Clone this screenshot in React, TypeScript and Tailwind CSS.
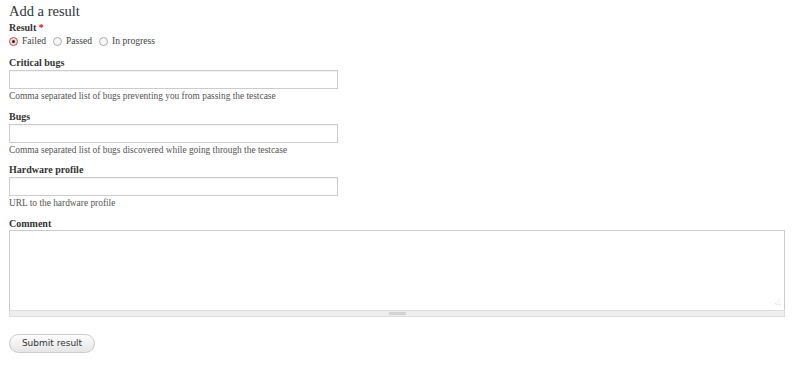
import React from "react";

const serif = { fontFamily: '"Liberation Serif", "DejaVu Serif", serif' };

function Field({ label, desc, h }: { label: string; desc: string; h: string }) {
  return (
    <div className={h}>
      <div className="text-[10px] font-bold leading-[15px] pt-[1px] text-[#333] h-[16px]">{label}</div>
      <div className="w-[329px] h-[19px] border border-[#ccc] bg-white shadow-[inset_0_1px_1px_rgba(0,0,0,0.05)]" />
      <div className="text-[9.4px] leading-[14px] text-[#555]">{desc}</div>
    </div>
  );
}

function Radio({ checked, label }: { checked?: boolean; label: string }) {
  return (
    <div className="flex items-center gap-[4px] mr-[7px]">
      <span
        className={
          "w-[9px] h-[9px] rounded-full border flex items-center justify-center " +
          (checked ? "border-[#c05050] bg-[#f3d6d6]" : "border-[#aaa] bg-[#f7f7f7]")
        }
      >
        {checked && <span className="w-[3px] h-[3px] rounded-full bg-[#222]" />}
      </span>
      <span className="text-[9.6px] text-[#444]">{label}</span>
    </div>
  );
}

export default function App() {
  return (
    <div className="w-[794px] h-[367px] bg-white px-[9px] pt-[1px]" style={serif}>
      <div className="text-[14.5px] leading-[20px] text-[#2e3440] h-[20px]">Add a result</div>
      <div className="text-[10px] font-bold leading-[14px] text-[#333] h-[13px]">
        Result <span className="text-[#e00]">*</span>
      </div>
      <div className="flex items-center h-[14px]">
        <Radio checked label="Failed" />
        <Radio label="Passed" />
        <Radio label="In progress" />
      </div>
      <div className="mt-[6px]">
        <Field h="h-[54px]" label="Critical bugs" desc="Comma separated list of bugs preventing you from passing the testcase" />
        <Field h="h-[53px]" label="Bugs" desc="Comma separated list of bugs discovered while going through the testcase" />
        <Field h="h-[54px]" label="Hardware profile" desc="URL to the hardware profile" />
      </div>
      <div className="text-[10px] font-bold leading-[14px] text-[#333] h-[14px] mt-[1px] pt-[1px]">Comment</div>
      <div className="w-[776px]">
        <div className="relative h-[80px] border border-[#ccc] border-b-0 bg-white">
          <svg className="absolute right-[3px] bottom-[4px]" width="8" height="8" viewBox="0 0 8 8">
            <line x1="7" y1="1" x2="1" y2="7" stroke="#ccc" strokeWidth="0.8" strokeDasharray="1 1" />
            <line x1="7" y1="3.5" x2="3.5" y2="7" stroke="#ccc" strokeWidth="0.8" strokeDasharray="1 1" />
            <line x1="7" y1="6" x2="6" y2="7" stroke="#ccc" strokeWidth="0.8" />
          </svg>
        </div>
        <div className="h-[7px] border border-[#ddd] bg-[#eee] flex items-center justify-center">
          <div className="w-[17px] h-[3px] bg-[#d4d4d4]" />
        </div>
      </div>
      <button
        className="mt-[17px] h-[19px] w-[86px] rounded-full border border-[#ccc] bg-gradient-to-b from-[#fdfdfd] to-[#e6e6e6] text-[9px] text-[#333] flex items-center justify-center"
        style={{ fontFamily: '"DejaVu Sans", Verdana, sans-serif' }}
      >
        Submit result
      </button>
    </div>
  );
}
